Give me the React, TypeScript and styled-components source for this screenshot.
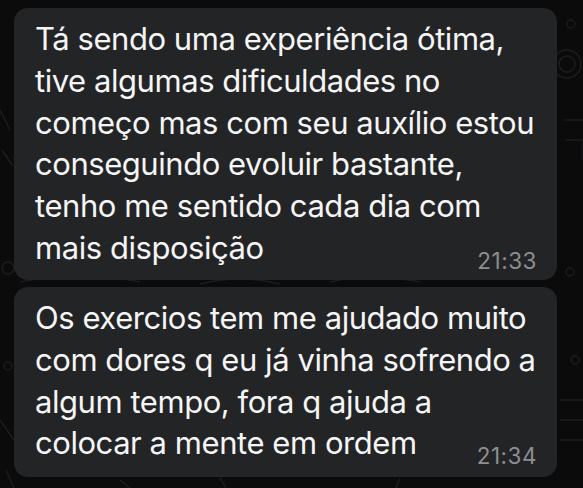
import React from "react";
import styled, { createGlobalStyle } from "styled-components";

const Global = createGlobalStyle`
  html, body { margin: 0; padding: 0; background: #0b0b0c; }
  body { width: 583px; height: 488px; overflow: hidden; }
`;

const Screen = styled.div`
  position: relative;
  width: 583px;
  height: 488px;
  background: #0b0b0c;
  overflow: hidden;
  font-family: Inter, "Liberation Sans", sans-serif;
`;

const Doodles = styled.svg`
  position: absolute;
  inset: 0;
  width: 583px;
  height: 488px;
`;

const Thread = styled.div`
  position: relative;
  display: flex;
  flex-direction: column;
  gap: 7px;
  padding: 8px 26px 0 14px;
`;

const Bubble = styled.div<{ $h: number }>`
  background: #232426;
  border-radius: 14px;
  height: ${(p) => p.$h}px;
  box-sizing: border-box;
  padding: 10px 20px 0 21px;
  display: flex;
  flex-direction: column;
`;

const Line = styled.div`
  color: #f5f5f5;
  font-size: 31px;
  line-height: 41.8px;
  letter-spacing: -0.45px;
  white-space: nowrap;
`;

const LastRow = styled.div`
  display: flex;
  justify-content: space-between;
  align-items: flex-end;
`;

const Time = styled.span`
  color: #8e8e92;
  font-size: 22.5px;
  line-height: 22px;
  margin-bottom: -3px;
  letter-spacing: 0.5px;
`;

type Msg = { lines: string[]; time: string; h: number };

const messages: Msg[] = [
  {
    lines: [
      "Tá sendo uma experiência ótima,",
      "tive algumas dificuldades no",
      "começo mas com seu auxílio estou",
      "conseguindo evoluir bastante,",
      "tenho me sentido cada dia com",
      "mais disposição",
    ],
    time: "21:33",
    h: 272,
  },
  {
    lines: [
      "Os exercios tem me ajudado muito",
      "com dores q eu já vinha sofrendo a",
      "algum tempo, fora q ajuda a",
      "colocar a mente em ordem",
    ],
    time: "21:34",
    h: 190,
  },
];

export default function App() {
  return (
    <Screen>
      <Global />
      <Doodles viewBox="0 0 583 488" fill="none" stroke="#1d1d1f" strokeWidth="1.5">
        <circle cx="571" cy="24" r="4" />
        <circle cx="567" cy="64" r="14" />
        <circle cx="567" cy="64" r="8" />
        <circle cx="8" cy="268" r="6" />
        <circle cx="570" cy="272" r="4" />
        <circle cx="575" cy="360" r="4" />
        <circle cx="8" cy="366" r="4" />
        <path d="M0 110 L10 130 M2 150 L12 165 M0 420 L14 440 M6 470 L14 488" />
        <path d="M563 120 h20 M565 140 h18 v20 M560 400 h23 M560 420 h23 M560 440 h23" />
        <path d="M20 282 q60 -12 120 0 M200 284 q40 -10 80 0 M330 282 q40 -10 90 0" />
        <path d="M120 480 l10 8 M220 478 l6 10 M400 478 l-4 10" />
      </Doodles>
      <Thread>
        {messages.map((m, i) => (
          <Bubble key={i} $h={m.h}>
            {m.lines.slice(0, -1).map((l, j) => (
              <Line key={j}>{l}</Line>
            ))}
            <LastRow>
              <Line>{m.lines[m.lines.length - 1]}</Line>
              <Time>{m.time}</Time>
            </LastRow>
          </Bubble>
        ))}
      </Thread>
    </Screen>
  );
}
